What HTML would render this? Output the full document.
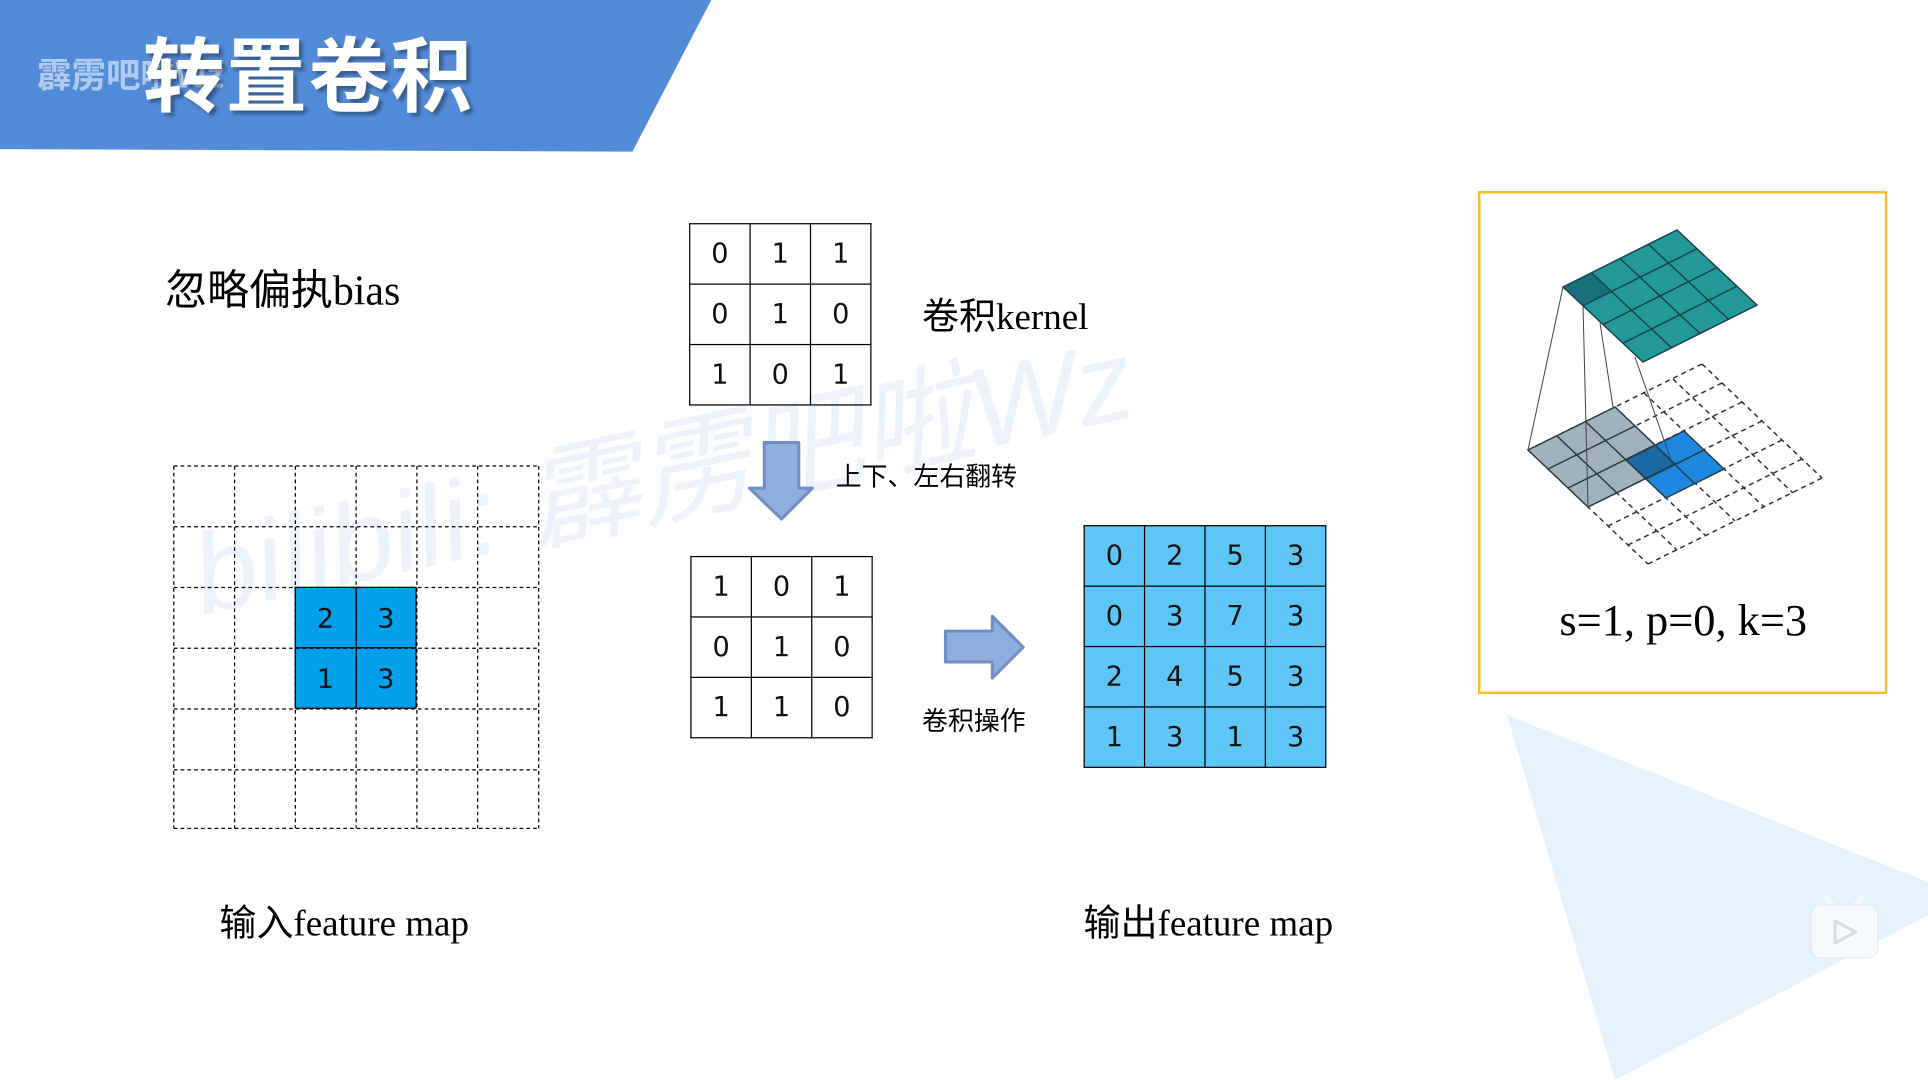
<!DOCTYPE html>
<html><head><meta charset="utf-8">
<style>
html,body{margin:0;padding:0;background:#fff;overflow:hidden}
body{width:1928px;height:1080px;position:relative;font-family:"Liberation Sans","Noto Sans CJK SC",sans-serif}
#c{position:absolute;left:0;top:0;width:1564px;height:876px;transform:scale(1.2327);transform-origin:0 0}
.a{position:absolute}
table{border-collapse:collapse;position:absolute}
td{border:1px solid #000;width:48px;height:48px;padding:0;text-align:center;font-size:22px;font-family:"DejaVu Sans","Liberation Sans",sans-serif;color:#111}
.ser{font-family:"Liberation Serif","Noto Sans CJK SC",serif;color:#000}
</style></head><body>
<svg class="a" style="left:0;top:0" width="1928" height="1080">
<polygon points="1507,715 1928,882 1928,915 1615,1080" fill="#e6f3fc"/>
</svg>
<div id="c">
<svg class="a" style="left:0;top:0" width="600" height="130"><polygon points="0,0 577,0 513,123 0,121" fill="#528cd9"/></svg>
<div class="a" style="left:30px;top:40px;font-size:28px;font-weight:bold;color:rgba(255,255,255,0.55);font-family:'Noto Sans CJK SC',sans-serif">霹雳吧啦Wz</div>
<div class="a" style="left:116px;top:9px;font-size:66px;font-weight:bold;color:#fff;font-family:'Noto Sans CJK SC',sans-serif;text-shadow:3px 3px 3px rgba(0,0,0,0.35);letter-spacing:1px">转置卷积</div>

<div class="a" style="left:170px;top:392px;font-size:92px;color:#edf3fa;transform:rotate(-12deg);transform-origin:0 100%;white-space:nowrap;font-family:'Liberation Sans','Noto Sans CJK SC',sans-serif;font-style:italic">bilibili: 霹雳吧啦Wz</div>

<div class="a ser" style="left:134px;top:208px;font-size:34px;white-space:nowrap">忽略偏执bias</div>
<table style="left:559px;top:181px"><tr><td>0</td><td>1</td><td>1</td></tr><tr><td>0</td><td>1</td><td>0</td></tr><tr><td>1</td><td>0</td><td>1</td></tr></table>
<div class="a ser" style="left:748px;top:232px;font-size:30px;white-space:nowrap">卷积kernel</div>

<svg class="a" style="left:600px;top:350px" width="240" height="210">
<polygon points="20,9 48,9 48,46 59,46 34,71 8,46 20,46" fill="#8eaedc" stroke="#6e8fc2" stroke-width="2.5" stroke-linejoin="round"/>
<polygon points="167,162 205,162 205,150 230,175 205,200 205,187 167,187" fill="#8eaedc" stroke="#6e8fc2" stroke-width="2.5" stroke-linejoin="round"/>
</svg>
<div class="a" style="left:678px;top:371px;font-size:21px;font-family:'Noto Sans CJK SC',sans-serif;white-space:nowrap">上下、左右翻转</div>
<div class="a" style="left:748px;top:569px;font-size:21px;font-family:'Noto Sans CJK SC',sans-serif;white-space:nowrap">卷积操作</div>

<svg class="a" style="left:140px;top:377px" width="300" height="300">
<rect x="99" y="99" width="98" height="98" fill="#00a0ea"/>
<g stroke="#000" stroke-width="1" stroke-dasharray="3,2.5" fill="none">
<path d="M1,1H297M1,50.3H297M1,99.6H297M1,148.9H297M1,198.2H297M1,247.5H297M1,295H297"/>
<path d="M1,1V295M50.3,1V295M99.6,1V295M148.9,1V295M198.2,1V295M247.5,1V295M297,1V295"/>
</g>
<g stroke="#000" stroke-width="1" fill="none"><rect x="99.5" y="99.5" width="98" height="98"/><path d="M148.9,99.5V197.5M99.5,148.5H197.5"/></g>
<g font-size="22" font-family="DejaVu Sans,sans-serif" text-anchor="middle" fill="#111"><text x="124" y="132">2</text><text x="173" y="132">3</text><text x="124" y="181">1</text><text x="173" y="181">3</text></g>
</svg>

<table style="left:560px;top:451px"><tr><td>1</td><td>0</td><td>1</td></tr><tr><td>0</td><td>1</td><td>0</td></tr><tr><td>1</td><td>1</td><td>0</td></tr></table>
<table style="left:879px;top:426px;background:#5ec6f6"><tr><td>0</td><td>2</td><td>5</td><td>3</td></tr><tr><td>0</td><td>3</td><td>7</td><td>3</td></tr><tr><td>2</td><td>4</td><td>5</td><td>3</td></tr><tr><td>1</td><td>3</td><td>1</td><td>3</td></tr></table>

<div class="a ser" style="left:178px;top:724px;font-size:30px;white-space:nowrap">输入feature map</div>
<div class="a ser" style="left:879px;top:724px;font-size:30px;white-space:nowrap">输出feature map</div>

<div class="a" style="left:1199px;top:155px;width:328px;height:404px;border:2.5px solid #f8bd22"></div>
<div class="a ser" style="left:1265px;top:482px;font-size:36px;white-space:nowrap">s=1, p=0, k=3</div>
</div>

<svg class="a" style="left:0;top:0" width="1928" height="1080">
<g stroke="#333" stroke-width="1.5" stroke-dasharray="5,4" fill="none">
<path d="M1528,450L1702,364M1548,469L1722,383M1568,488L1742,402M1588,507L1762,421M1608,526L1782,440M1628,545L1802,459M1648,564L1822,478"/>
<path d="M1528,450L1648,564M1557,436L1677,550M1586,422L1706,536M1615,407L1735,521M1644,393L1764,507M1673,379L1793,493M1702,364L1822,478"/>
</g>
<polygon points="1528,450 1615,407 1675,464 1588,507" fill="#9fb1bb"/>
<polygon points="1626,460 1684,431 1724,469 1666,498" fill="#1e88e0"/>
<polygon points="1626,460 1655,445 1675,464 1646,479" fill="#1b6aa6"/>
<g stroke="#2a3a42" stroke-width="1.5" fill="none">
<path d="M1528,450L1615,407L1675,464L1588,507Z M1548,469L1635,426 M1568,488L1655,445 M1557,436L1617,493 M1586,422L1646,479"/>
<path d="M1626,460L1684,431L1724,469L1666,498Z M1646,479L1704,450 M1655,445L1695,484"/>
</g>
<polygon points="1563,287 1677,230 1757,305 1643,362" fill="#23989a"/>
<polygon points="1563,287 1591.5,272.75 1611.5,291.5 1583,305.75" fill="#1a6f7f"/>
<g stroke="#17434a" stroke-width="1.5" fill="none">
<path d="M1563,287L1677,230L1757,305L1643,362Z"/>
<path d="M1583,305.75L1697,248.75M1603,324.5L1717,267.5M1623,343.25L1737,286.25"/>
<path d="M1591.5,272.75L1671.5,347.75M1620,258.5L1700,333.5M1648.5,244.25L1728.5,319.25"/>
</g>
<g stroke="#444" stroke-width="1" fill="none">
<path d="M1563,287L1528,450M1583,305L1588,507M1600,323L1613,407M1635,357L1672,463"/>
</g>
<g>
<path d="M1826,898L1836,908M1862,898L1852,908" stroke="#f4f8fc" stroke-width="5" stroke-linecap="round"/>
<rect x="1811" y="905" width="67" height="53" rx="10" fill="#f7fafd" stroke="#e0e6ec" stroke-width="1"/>
<path d="M1835,921L1856,932L1835,943Z" fill="none" stroke="#d4dde6" stroke-width="3" stroke-linejoin="round"/>
</g>
</svg>
</body></html>
